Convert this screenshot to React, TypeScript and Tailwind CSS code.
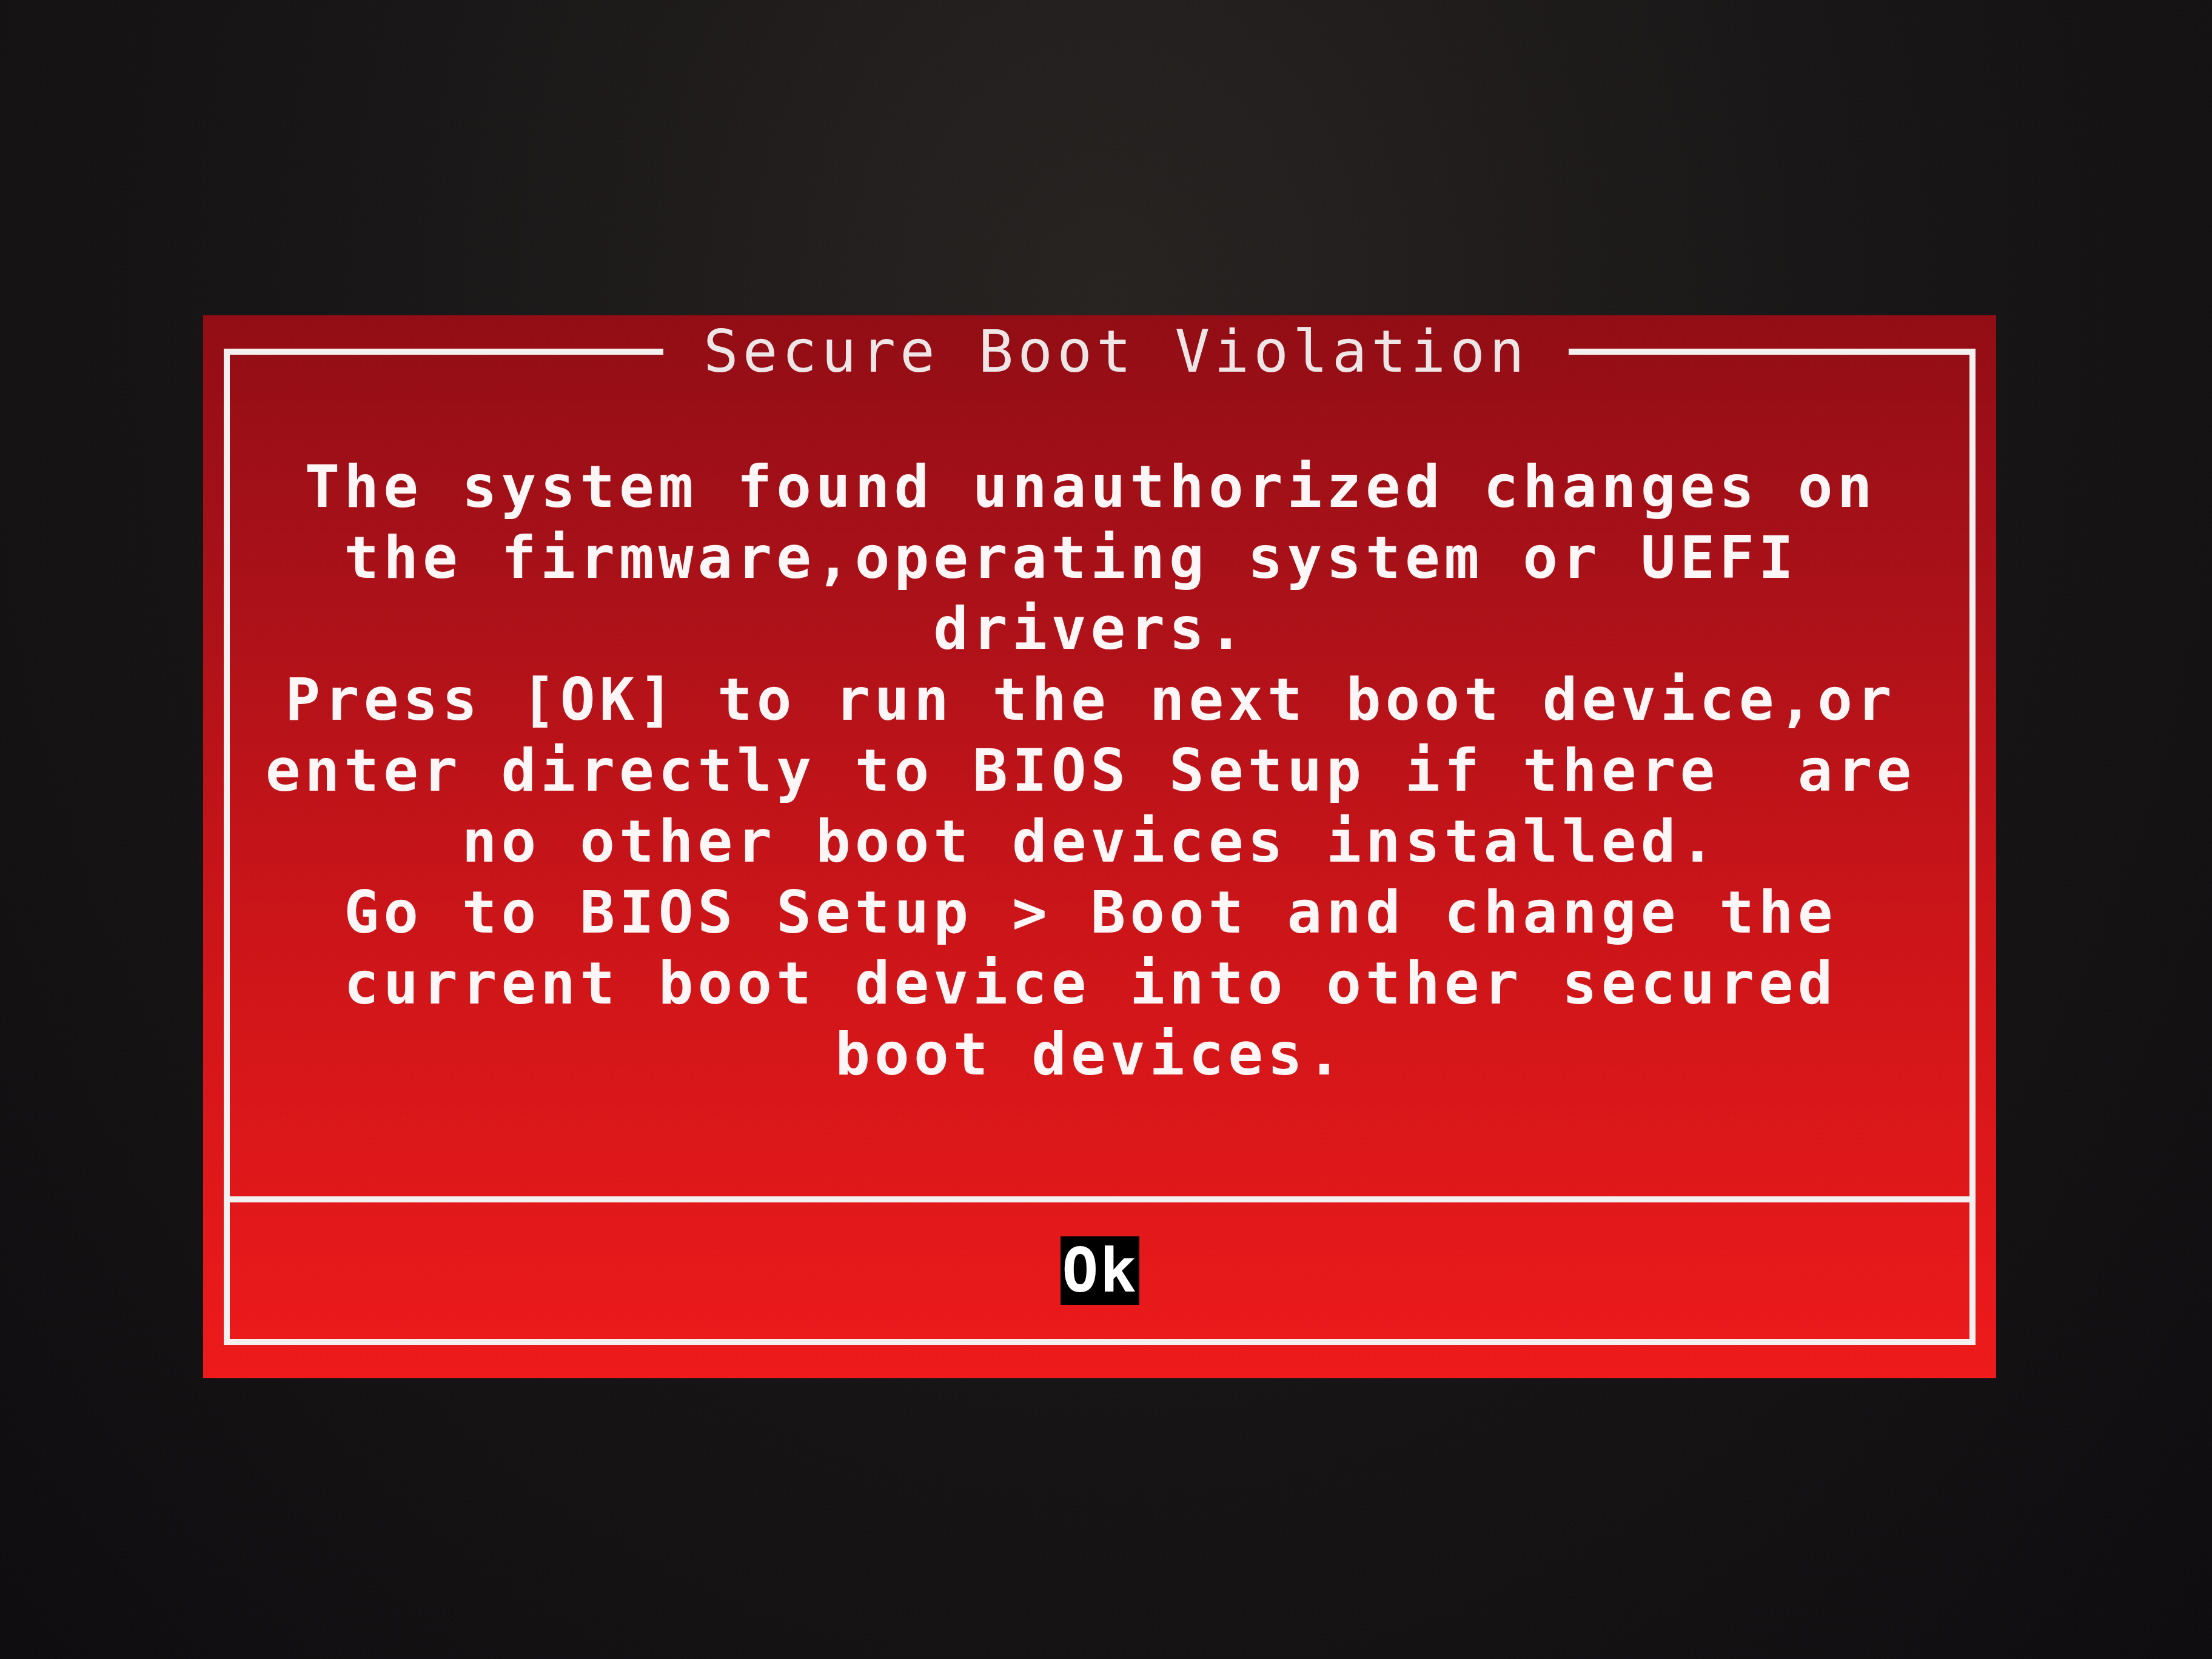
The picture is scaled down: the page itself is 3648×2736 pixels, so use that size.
const bodyLines = [
	'The system found unauthorized changes on',
	'the firmware,operating system or UEFI ',
	'drivers.',
	'Press [OK] to run the next boot device,or',
	'enter directly to BIOS Setup if there  are',
	'no other boot devices installed.',
	'Go to BIOS Setup > Boot and change the',
	'current boot device into other secured',
	'boot devices.',
]

function FrameTitle({ title }: { title: string }) {
	return (
		<div className="flex items-center h-[10px]">
			<div className="h-[10px] flex-[1.08] bg-[#f4f0f0]" />
			<div className="px-[66px] whitespace-pre text-[96px] leading-none tracking-[7px] text-[#eee6e6]">
				{title}
			</div>
			<div className="h-[10px] flex-1 bg-[#f4f0f0]" />
		</div>
	)
}

export default function App() {
	return (
		<div className="w-[3648px] h-[2736px] bg-[radial-gradient(ellipse_at_50%_18%,#282422_0%,#1a1718_45%,#0f0d0f_100%)] pl-[335px] pt-[520px] font-['DejaVu_Sans_Mono',monospace]">
			<div className="w-[2957px] h-[1753px] px-[34px] py-[55px] bg-[linear-gradient(180deg,#920d15_0%,#aa1119_25%,#cc1519_58%,#ee1a1b_100%)]">
				<div className="flex flex-col h-full">
					<FrameTitle title="Secure Boot Violation" />
					<div className="flex-1 flex flex-col border-x-[10px] border-b-[10px] border-[#f4f0f0]">
						<div className="flex-1 pt-[160px] pr-[30px] flex flex-col items-center text-[96px] leading-[117px] tracking-[7px] font-bold text-[#fdf6f6]">
							{bodyLines.map((line, i) => (
								<div key={i} className="whitespace-pre">
									{line}
								</div>
							))}
						</div>
						<div className="h-[10px] bg-[#f4f0f0]" />
						<div className="h-[225px] flex items-center justify-center">
							<div className="h-[113px] w-[130px] bg-black flex items-center justify-center text-[100px] leading-none tracking-[2px] font-bold text-white">
								Ok
							</div>
						</div>
					</div>
				</div>
			</div>
		</div>
	)
}
